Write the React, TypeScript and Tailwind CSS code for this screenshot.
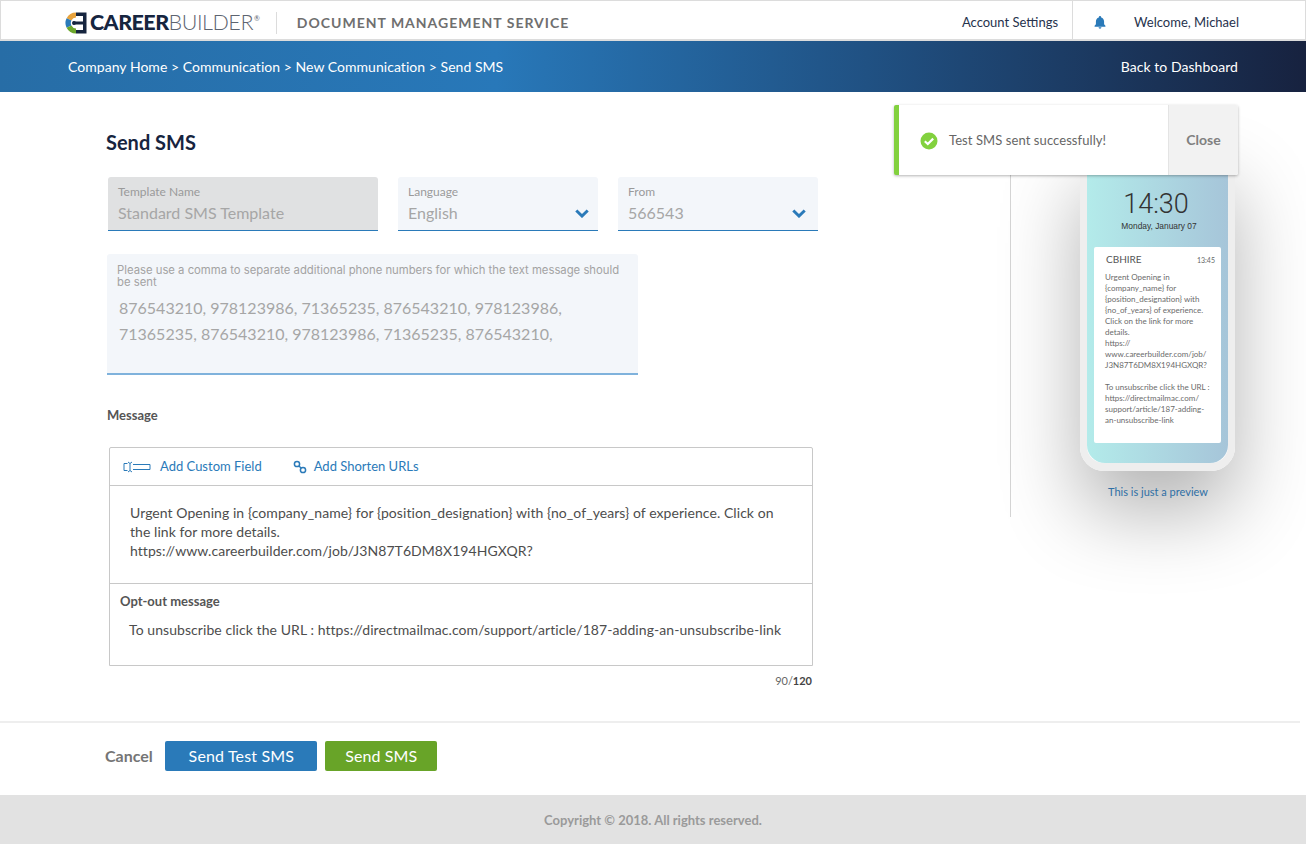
import React from "react";

const font = { fontFamily: '"Lato", "Liberation Sans", sans-serif' };

function Logo() {
  return (
    <div className="flex items-center">
      <svg width="22" height="22" viewBox="0 0 22 22" className="mr-[3px]">
        <path d="M11 0.5 A10.5 10.5 0 0 0 1.6 6.3 L6.4 8.5 A5.5 5.5 0 0 1 11 5.5Z" fill="#e8a33d" />
        <path d="M1.6 6.3 A10.5 10.5 0 0 0 1.6 15.7 L6.4 13.5 A5.5 5.5 0 0 1 6.4 8.5Z" fill="#2a7ab9" />
        <path d="M1.6 15.7 A10.5 10.5 0 0 0 11 21.5 L11 16.5 A5.5 5.5 0 0 1 6.4 13.5Z" fill="#6ca72c" />
        <path d="M11 0.5 H21.5 V21.5 H11 V18 H18 V4 H11Z" fill="#16253f" />
        <rect x="8" y="9.5" width="11" height="3" fill="#16253f" />
        <circle cx="9" cy="11" r="2" fill="#16253f" />
      </svg>
      <span className="text-[21.5px] leading-none font-black tracking-[-0.55px] text-[#16253f]">CAREER</span>
      <span className="text-[21.5px] leading-none font-light tracking-[-0.45px] text-[#5d6470]">BUILDER</span>
      <span className="ml-[1px] mt-[-8px] text-[7px] leading-none text-[#5d6470]">®</span>
    </div>
  );
}

function Field({ label, value, bg, width, chevronRight }: { label: string; value: string; bg: string; width: string; chevronRight?: string }) {
  return (
    <div className={`${width} ${bg} relative h-[54px] rounded-t-[3px] border-b border-[#2a7ab9] pl-[10px] pt-[8px]`}>
      <div className="text-[12px] leading-[14px] text-[#9a9a9a]">{label}</div>
      <div className="mt-[4px] text-[16px] leading-[20px] text-[#a6a6a6]">{value}</div>
      {chevronRight && (
        <svg width="14" height="9" viewBox="0 0 14 9" className={`absolute top-[32px] ${chevronRight}`}>
          <path d="M1.3 1.5 L7 7 L12.7 1.5" fill="none" stroke="#2a7ab9" strokeWidth="3" />
        </svg>
      )}
    </div>
  );
}

function Phone() {
  return (
    <div className="flex w-[155px] flex-col items-center">
      <div className="h-[321px] w-[155px] rounded-b-[24px] border-x-[7px] border-b-[8px] border-[#eeeeee] shadow-[0_40px_80px_rgba(0,0,0,0.3)]">
        <div className="flex h-full flex-col items-center rounded-b-[18px] bg-gradient-to-r from-[#b3ebea] to-[#a6c5d9]">
          <div className="mr-[3px] mt-[39px] text-[27px] leading-[30px] text-[#333]" style={{ fontFamily: '"Roboto", sans-serif', fontWeight: 300 }}>14:30</div>
          <div className="ml-[3px] mt-[1px] text-[8.4px] leading-[12px] text-[#333]" style={{ fontFamily: '"Liberation Sans", sans-serif' }}>Monday, January 07</div>
          <div className="mt-[15px] h-[196px] w-[127px] rounded-[2px] bg-white pl-[11px] pr-[6px] pt-[4px]">
            <div className="flex items-center justify-between">
              <span className="ml-[1px] text-[10px] leading-[14px] text-[#555]">CBHIRE</span>
              <span className="mt-[2px] text-[7px] leading-[14px] text-[#666]">13:45</span>
            </div>
            <div className="mt-[5px] whitespace-nowrap text-[8px] leading-[11px] text-[#6b6b6b]">
              Urgent Opening in<br />
              {"{company_name}"} for<br />
              {"{position_designation}"} with<br />
              {"{no_of_years}"} of experience.<br />
              Click on the link for more<br />
              details.<br />
              https://<br />
              www.careerbuilder.com/job/<br />
              J3N87T6DM8X194HGXQR?<br />
              <br />
              To unsubscribe click the URL :<br />
              https://directmailmac.com/<br />
              support/article/187-adding-<br />
              an-unsubscribe-link
            </div>
          </div>
        </div>
      </div>
      <div className="relative ml-[1px] mt-[13px] text-[11px] leading-[16px] text-[#2f6fa5]">This is just a preview</div>
    </div>
  );
}

export default function App() {
  return (
    <div className="relative flex h-[844px] w-[1306px] flex-col overflow-hidden bg-white" style={font}>
      <header className="flex h-[41px] shrink-0 items-center border border-b-2 border-[#dcdcdc] bg-white pl-[64px]">
        <div className="mt-[5px]"><Logo /></div>
        <div className="ml-[16px] mt-[5px] h-[22px] w-px bg-[#dcdcdc]" />
        <div className="ml-[20px] mt-[5px] text-[14px] font-bold tracking-[1px] text-[#6f6f6f]">DOCUMENT MANAGEMENT SERVICE</div>
        <div className="ml-auto mt-[5px] text-[13px] text-[#26324d]">Account Settings</div>
        <div className="ml-[14px] h-full w-px bg-[#dcdcdc]" />
        <svg width="14" height="14" viewBox="0 0 24 24" className="ml-[20px] mt-[3px]" fill="#2a7ab9">
          <path d="M12 1.5a2 2 0 0 0-2 2v.6C6.8 5 5 7.7 5 11v5l-2.3 2.6V20h18.6v-1.4L19 16v-5c0-3.3-1.8-6-5-6.9v-.6a2 2 0 0 0-2-2zM9.5 21a2.5 2.5 0 0 0 5 0z" />
        </svg>
        <div className="ml-[27px] mr-[66px] mt-[5px] text-[13px] text-[#26324d]">Welcome, Michael</div>
      </header>

      <nav className="flex h-[51px] shrink-0 items-center justify-between pl-[68px] pr-[68px] text-[14px] tracking-[0.04px] text-white" style={{ backgroundImage: "linear-gradient(90deg,#276da6 0%,#2878b9 38%,#1f4c7c 70%,#17223f 100%)" }}>
        <span>Company Home &gt; Communication &gt; New Communication &gt; Send SMS</span>
        <span>Back to Dashboard</span>
      </nav>

      <main className="flex h-[629px] shrink-0">
        <section className="w-[1010px] shrink-0 pl-[106px]">
          <h1 className="mt-[37px] text-[20px] font-bold leading-[26px] text-[#17243f]">Send SMS</h1>

          <div className="ml-[2px] mt-[22px] flex gap-[20px]">
            <Field label="Template Name" value="Standard SMS Template" bg="bg-[#e0e1e2]" width="w-[270px]" />
            <Field label="Language" value="English" bg="bg-[#f3f6fa]" width="w-[200px]" chevronRight="right-[9px]" />
            <Field label="From" value="566543" bg="bg-[#f3f6fa]" width="w-[200px]" chevronRight="right-[12px]" />
          </div>

          <div className="ml-[1px] mt-[23px] h-[121px] w-[531px] rounded-t-[3px] border-b-2 border-[#7fb2dc] bg-[#f3f6fa] pl-[10px] pr-[10px] pt-[10px]">
            <div className="text-[11.3px] leading-[12px] text-[#a3a3a3]" style={{ fontFamily: '"Inter", sans-serif' }}>Please use a comma to separate additional phone numbers for which the text message should be sent</div>
            <div className="ml-[2px] mt-[7px] text-[16px] leading-[26px] text-[#a6a6a6]">
              876543210, 978123986, 71365235, 876543210, 978123986,<br />
              71365235, 876543210, 978123986, 71365235, 876543210,
            </div>
          </div>

          <div className="ml-[1px] mt-[31px] text-[13px] font-bold leading-[18px] text-[#555]">Message</div>

          <div className="ml-[3px] mt-[23px] h-[219px] w-[704px] rounded-t-[2px] border border-[#c8c8c8]">
            <div className="flex h-[38px] items-center border-b border-[#c8c8c8] pl-[13px] text-[13px] text-[#2a7ab9]">
              <svg width="28" height="12" viewBox="0 0 28 12" fill="none" stroke="#2a7ab9" strokeWidth="1">
                <path d="M4.5 2.5H1V9.5H4.5" />
                <path d="M5 1L7 2.5L9 1M7 2.5V9.5M5 11L7 9.5L9 11" />
                <path d="M10 3.5H27V8.5H10" />
              </svg>
              <span className="ml-[9px]">Add Custom Field</span>
              <svg width="14" height="14" viewBox="0 0 14 14" className="ml-[31px]" fill="none" stroke="#2a7ab9" strokeWidth="1.5">
                <circle cx="4" cy="4" r="2.6" />
                <circle cx="10" cy="10" r="2.6" />
                <path d="M6 6L8 8" />
              </svg>
              <span className="ml-[7px]">Add Shorten URLs</span>
            </div>
            <div className="h-[98px] border-b border-[#c8c8c8] pl-[20px] pr-[30px] pt-[17px] text-[14px] leading-[19px] tracking-[0.06px] text-[#4d4d4d]">
              Urgent Opening in {"{company_name}"} for {"{position_designation}"} with {"{no_of_years}"} of experience. Click on the link for more details.<br />
              https://www.careerbuilder.com/job/J3N87T6DM8X194HGXQR?
            </div>
            <div className="pl-[10px] pt-[8px] text-[13px] font-bold leading-[18px] text-[#555]">Opt-out message</div>
            <div className="ml-[19px] mt-[10px] text-[14px] leading-[19px] tracking-[0.07px] text-[#4d4d4d]">To unsubscribe click the URL : https://directmailmac.com/support/article/187-adding-an-unsubscribe-link</div>
          </div>
          <div className="ml-[3px] mt-[8px] w-[703px] text-right text-[11px] leading-[14px] text-[#666]">90/<b className="text-[#444]">120</b></div>
        </section>

        <aside className="relative flex flex-1">
          <div className="mt-[70px] h-[355px] w-px bg-[#d5d5d5]" />
          <div className="ml-[69px] mt-[58px]"><Phone /></div>
        </aside>
      </main>

      <div className="h-[2px] w-[1300px] shrink-0 bg-[#eeeeee]" />

      <div className="flex h-[72px] shrink-0 items-center pb-[6px] pl-[105px]">
        <span className="text-[16px] font-bold text-[#757575]">Cancel</span>
        <button className="ml-[12px] h-[30px] w-[152px] rounded-[2px] bg-[#2a7ab9] pl-[1px] text-[16px] tracking-[0.15px] text-white">Send Test SMS</button>
        <button className="ml-[8px] h-[30px] w-[112px] rounded-[2px] bg-[#68a428] pl-[1px] text-[16px] tracking-[0.1px] text-white">Send SMS</button>
      </div>

      <footer className="flex h-[49px] shrink-0 items-center justify-center bg-[#e2e2e2] pt-[2px] text-[13px] font-bold text-[#9a9a9a]">
        Copyright © 2018. All rights reserved.
      </footer>

      <div className="absolute left-[894px] top-[105px] flex h-[70px] w-[344px] overflow-hidden rounded-[2px] border-l-[5px] border-[#82d13e] bg-white shadow-[0_1px_3px_rgba(0,0,0,0.3)]">
        <div className="flex flex-1 items-center pl-[21px] pt-[2px]">
          <svg width="18" height="18" viewBox="0 0 18 18">
            <circle cx="9" cy="9" r="8.5" fill="#82d13e" />
            <path d="M4.8 9.2L7.8 12L13.2 6.6" fill="none" stroke="#fff" strokeWidth="2.2" />
          </svg>
          <span className="ml-[11px] text-[13px] tracking-[0.08px] text-[#666]">Test SMS sent successfully!</span>
        </div>
        <div className="flex w-[70px] items-center justify-center border-l border-[#e4e4e4] bg-[#f2f2f2] pb-[2px] text-[14px] font-bold text-[#808080]">Close</div>
      </div>
    </div>
  );
}
